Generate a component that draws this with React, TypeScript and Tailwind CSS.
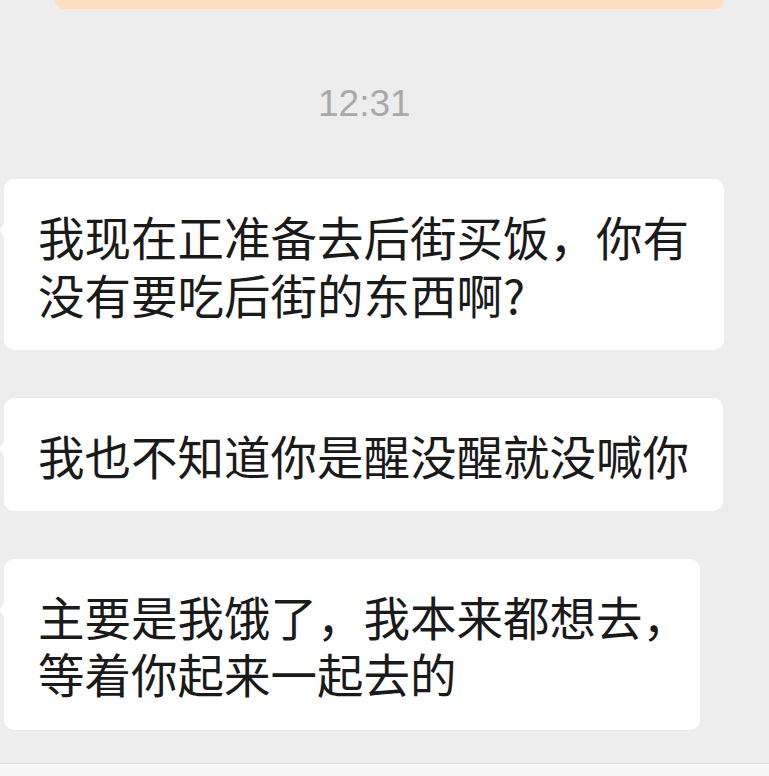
import React from "react"

const CJK = { fontFamily: '"Noto Sans CJK SC", "Noto Sans", sans-serif' }

type Msg = { lines: string[]; width: string }

const messages: Msg[] = [
    { lines: ["我现在正准备去后街买饭，你有", "没有要吃后街的东西啊?"], width: "w-[720px]" },
    { lines: ["我也不知道你是醒没醒就没喊你"], width: "w-[719px]" },
    { lines: ["主要是我饿了，我本来都想去，", "等着你起来一起去的"], width: "w-[696px]" },
]

function Tail() {
    return (
        <svg
            className="absolute -left-[4px] top-[36px]"
            width="6"
            height="30"
            viewBox="0 0 6 30"
        >
            <path d="M6 0 C6 8 0 12 0 15 C0 18 6 22 6 30 Z" fill="#ffffff" />
        </svg>
    )
}

function Bubble({ msg }: { msg: Msg }) {
    return (
        <div className={`relative ml-[4px] ${msg.width} rounded-[10px] bg-white pl-[34px] py-[28px]`}>
            <Tail />
            <div className="text-[46.5px] leading-[57.5px] text-[#1a1a1a] whitespace-nowrap" style={CJK}>
                {msg.lines.map((l, i) => (
                    <div key={i}>{l}</div>
                ))}
            </div>
        </div>
    )
}

export default function App() {
    return (
        <div className="flex h-[776px] w-[769px] flex-col overflow-hidden bg-[#ededed]">
            <div className="ml-[55px] h-[9px] w-[668px] rounded-b-[8px] bg-[#fde0c3]" />

            <div
                className="mt-[76px] pl-[318px] text-[37px] leading-none text-[#a9a9a9]"
                style={{ fontFamily: '"Liberation Sans", Arial, sans-serif' }}
            >
                12:31
            </div>

            <div className="mt-[57px] flex flex-col gap-[47.5px]">
                {messages.map((m, i) => (
                    <Bubble key={i} msg={m} />
                ))}
            </div>

            <div className="mt-auto h-[13px] border-t border-[#dcdcdc] bg-[#f7f7f7]" />
        </div>
    )
}
